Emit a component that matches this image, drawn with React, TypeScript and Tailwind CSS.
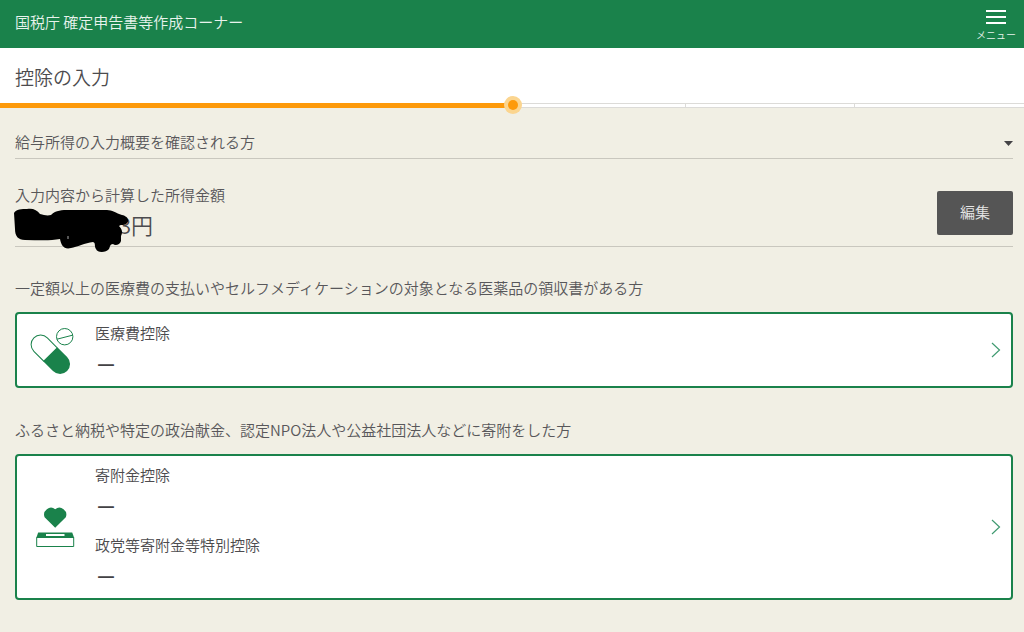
import type { ReactNode } from 'react';

const FONT = 'font-["Noto_Sans_CJK_JP",sans-serif]';

const REMAINING_STEPS = ['step-4', 'step-5', 'step-6'];

interface Deduction {
    name: string;
    value: string;
}

interface DeductionSectionProps {
    title: string;
    icon: ReactNode;
    items: Deduction[];
}

function PillIcon() {
    return (
        <svg className="w-[50px] h-[50px]" viewBox="0 0 50 50" fill="none" aria-hidden="true">
            <g transform="translate(22.5 29.5) rotate(45)">
                <path d="M0 -9.5H-14A9.5 9.5 0 0 0 -14 9.5H0Z" stroke="#1a824b" strokeWidth="1" />
                <path d="M0 -10H13.5A10 10 0 0 1 13.5 10H0Z" fill="#1a824b" />
            </g>
            <circle cx="36.7" cy="11.7" r="8.2" stroke="#1a824b" strokeWidth="1" />
            <path d="M29 14.2L44.5 10.2" stroke="#1a824b" strokeWidth="1" />
        </svg>
    );
}

function DonationIcon() {
    return (
        <svg className="w-[50px] h-[50px]" viewBox="0 0 50 50" fill="none" aria-hidden="true">
            <path
                d="M27.2 25.8L16.6 15.2A6.9 6.9 0 0 1 27.2 7.2A6.9 6.9 0 0 1 37.8 15.2Z"
                fill="#1a824b"
            />
            <path d="M10.2 30.5H44.2L46.2 36H8.2Z" fill="#1a824b" />
            <path d="M18 32H36.5V34H18Z" fill="#fff" />
            <path d="M8.7 35.5V44.5H45.7V35.5" stroke="#1a824b" strokeWidth="1" />
        </svg>
    );
}

function DeductionSection({ title, icon, items }: DeductionSectionProps) {
    return (
        <section className="mt-[29px] pb-px">
            <h2 className="text-[15px] leading-6 text-[#58575a]">{title}</h2>
            <a
                href="#"
                className="mt-3 flex items-center rounded-sm border-2 border-[#1a824b] bg-white pl-[11px] pr-2.5"
            >
                <span className="shrink-0">{icon}</span>
                <span className="ml-[17px] flex grow flex-col gap-4 pt-[7px] pb-[11px]">
                    {items.map((item) => (
                        <span key={item.name} className="flex flex-col gap-1.5">
                            <span className="text-[15px] leading-6 text-[#4c4b4e]">{item.name}</span>
                            <span className="text-[22px] font-medium leading-6 text-[#434245]">{item.value}</span>
                        </span>
                    ))}
                </span>
                <svg className="h-4 w-2.5 shrink-0" viewBox="0 0 10 16" fill="none" aria-hidden="true">
                    <path d="M1 1L8.5 8L1 15" stroke="#3f9a70" strokeWidth="1.2" />
                </svg>
            </a>
        </section>
    );
}

export default function App() {
    return (
        <div className={`min-h-screen bg-[#f1efe4] font-[350] ${FONT}`}>
            <header className="flex h-12 items-center justify-between bg-[#1a824b] pl-[15px] pr-2 text-[#e8f3ed]">
                <p className="pb-1 text-[15px] leading-6">国税庁 確定申告書等作成コーナー</p>
                <button type="button" className="flex flex-col items-center pt-1">
                    <svg className="h-[14px] w-5" viewBox="0 0 20 14" aria-hidden="true">
                        <path d="M0 1H20M0 7H20M0 13H20" stroke="#fff" strokeWidth="2" />
                    </svg>
                    <span className="mt-[3px] text-[10px] leading-4">メニュー</span>
                </button>
            </header>

            <div className="bg-white pt-[15px] pb-3 pl-[15px]">
                <h1 className="text-[19px] leading-7 text-[#4c4b4e]">控除の入力</h1>
            </div>

            {/* Progress */}
            <div className="flex h-[5px]">
                <div className="relative w-1/2 bg-[#fd9a0a]">
                    <span className="absolute -right-[10px] -top-[7px] flex size-[18px] items-center justify-center rounded-full bg-[#fbd58f]">
                        <span className="size-2.5 rounded-full bg-[#fd9a0a]" />
                    </span>
                </div>
                <div className="flex w-1/2 border-y border-[#dcdbd8] bg-white pl-1">
                    {REMAINING_STEPS.map((step) => (
                        <span key={step} className="grow border-r border-[#dcdbd8] last:border-r-0" />
                    ))}
                </div>
            </div>

            <main className="pt-5 pb-7 pl-[15px] pr-[11px]">
                <button
                    type="button"
                    className="flex h-[31px] w-full items-center justify-between border-b border-[#c9c7be] text-[15px] text-[#58575a]"
                >
                    <span className="pb-0.5">給与所得の入力概要を確認される方</span>
                    <svg className="h-[5px] w-[9px]" viewBox="0 0 9 5" aria-hidden="true">
                        <path d="M0 0H9L4.5 5Z" fill="#434245" />
                    </svg>
                </button>

                {/* Income */}
                <div className="flex items-center justify-between border-b border-[#c9c7be] pt-6 pb-1">
                    <div className="pb-px">
                        <p className="text-[15px] leading-6 text-[#58575a]">入力内容から計算した所得金額</p>
                        <p className="relative pl-[104px] text-[22px] leading-[34px] text-[#4c4b4e]">
                            3円
                            <svg
                                className="absolute -left-0.5 top-px h-11 w-[116px]"
                                viewBox="0 0 116 44"
                                aria-hidden="true"
                            >
                                <path
                                    d="M1 5C3 1 9 1 14 1C20 0 24 2 27 6C31 7 34 8 38 7C43 2 49 2 56 2H94C99 2 103 5 109 7C114 8 117 12 114 15C112 18 108 16 106 18C109 21 110 24 108 28V33C107 37 102 38 100 36C97 36 97 39 96 41C93 45 84 45 83 41C81 38 83 35 80 34C72 35 64 39 58 40C51 42 48 37 47 31C37 33 25 32 12 32C5 32 2 28 2 21Z"
                                    fill="#000"
                                />
                                <path d="M55 28V31" stroke="#aaa" strokeWidth="1" />
                            </svg>
                        </p>
                    </div>
                    <button
                        type="button"
                        className="h-11 w-[76px] rounded-xs bg-[#555] text-[15px] text-[#e6e6e6]"
                    >
                        編集
                    </button>
                </div>

                <DeductionSection
                    title="一定額以上の医療費の支払いやセルフメディケーションの対象となる医薬品の領収書がある方"
                    icon={<PillIcon />}
                    items={[{ name: '医療費控除', value: '－' }]}
                />
                <DeductionSection
                    title="ふるさと納税や特定の政治献金、認定NPO法人や公益社団法人などに寄附をした方"
                    icon={<DonationIcon />}
                    items={[
                        { name: '寄附金控除', value: '－' },
                        { name: '政党等寄附金等特別控除', value: '－' },
                    ]}
                />
            </main>
        </div>
    );
}
